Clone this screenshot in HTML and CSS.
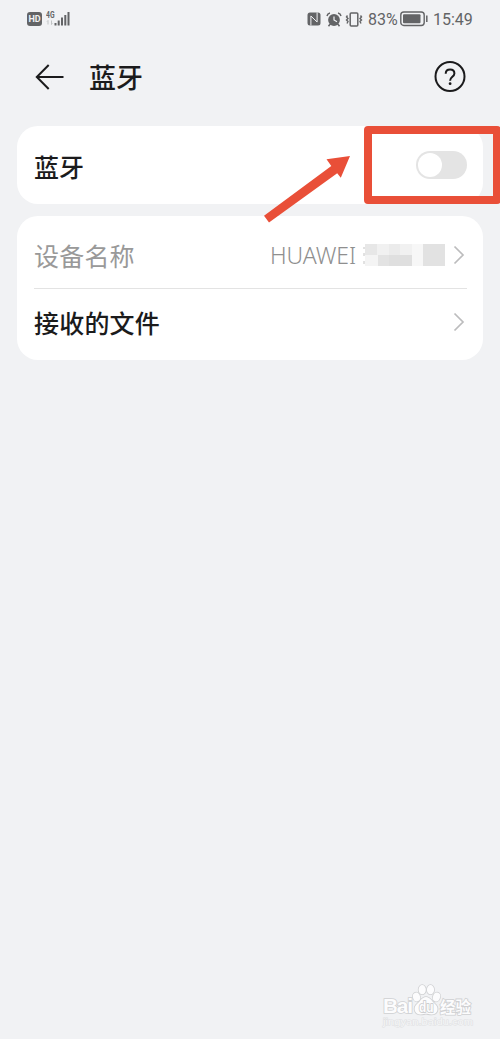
FILE: index.html
```html
<!DOCTYPE html>
<html lang="zh-CN">
<head>
  <meta charset="UTF-8">
  <meta name="viewport" content="width=device-width, initial-scale=1.0">
  <title>蓝牙</title>
  <link rel="stylesheet" href="styles.css">
</head>
<body>
  <div class="screen">
    <!-- Status bar -->
    <div class="status-bar">
      <div class="status-left">
        <span class="hd">HD</span>
        <svg class="signal" width="25" height="18" viewBox="0 0 25 18">
          <text class="net" x="0" y="8.4" textLength="8.5" lengthAdjust="spacingAndGlyphs">4G</text>
          <path d="M2 14.5v-4l-1 1M5.500 10.500v4l1-1" fill="none" stroke="#b5b7b9" stroke-width=".8"/>
          <path d="M8.500 13h2v2.500h-2zM11.700 10.500h2v5h-2zM15 7.500h2v8h-2zM18.300 5h2v10.500h-2zM21.500 2h2v13.500h-2z" fill="#636466"/>
        </svg>
      </div>
      <div class="status-right">
        <svg class="nfc" width="14" height="14" viewBox="0 0 14 14">
          <rect x=".5" y=".5" width="13" height="13" rx="2.500" fill="#636466"/>
          <path d="M3.900 13.500V4l6.200 6V.5" fill="none" stroke="#f1f2f4" stroke-width="1"/>
        </svg>
        <svg class="alarm" width="16" height="15" viewBox="0 0 16 15">
          <circle cx="8" cy="8" r="5.900" fill="#636466"/>
          <path d="M1 4Q1.500 1.500 4 1M15 4Q14.500 1.500 12 1M4 12.300l-1.500 2M12 12.300l1.500 2" fill="none" stroke="#636466" stroke-width="1.500"/>
          <path d="M8 4.500V8l3 1.800" fill="none" stroke="#f1f2f4" stroke-width="1.200"/>
        </svg>
        <svg class="vibrate" width="18" height="15" viewBox="0 0 18 15">
          <rect x="5.200" y="1" width="7.600" height="13" rx="1" fill="none" stroke="#636466" stroke-width="1.500"/>
          <path d="M2.500 3.500l-1 1.500 1.500 1.500-1.500 1.500L3 9.500l-1 2M15.500 3.500l1 1.500L15 6.500 16.500 8 15 9.500l1 2" fill="none" stroke="#636466" stroke-width="1.400"/>
        </svg>
        <span class="percent">83%</span>
        <svg class="battery" width="28" height="16" viewBox="0 0 28 16">
          <rect x=".8" y="1" width="23.400" height="13.500" rx="3" fill="none" stroke="#636466" stroke-width="1.400"/>
          <rect x="3" y="3.300" width="17.500" height="9" rx="1" fill="#636466"/>
          <path d="M26.800 4.500v6.500" stroke="#636466" stroke-width="1.500"/>
        </svg>
        <span class="time">15:49</span>
      </div>
    </div>

    <!-- Page header -->
    <div class="header">
      <svg class="back" width="30" height="28" viewBox="0 0 30 28">
        <path d="M28.500 14H2M13.700 2L1.800 14l11.900 12" fill="none" stroke="#1b1b1c" stroke-width="2"/>
      </svg>
      <h1>蓝牙</h1>
      <svg class="help" width="32" height="32" viewBox="0 0 32 32">
        <circle cx="16" cy="15.500" r="14.500" fill="none" stroke="#1b1b1c" stroke-width="2"/>
        <path d="M11.700 12.800c0-2.700 1.800-4.300 4.400-4.300s4.300 1.600 4.300 4c0 3.200-4.300 3.500-4.300 7.200" fill="none" stroke="#1b1b1c" stroke-width="2"/>
        <circle cx="16.100" cy="22.700" r="1.400" fill="#1b1b1c"/>
      </svg>
    </div>

    <!-- Bluetooth switch -->
    <div class="card switch-card">
      <span class="label">蓝牙</span>
      <span class="switch"><span class="knob"></span></span>
    </div>

    <!-- Device settings -->
    <div class="card">
      <div class="row row-name">
        <span class="label muted">设备名称</span>
        <span class="value">HUAWEI</span>
        <svg class="mosaic" width="82" height="24" viewBox="0 0 82 24">
          <path d="M1 4v2M1 10v3M1 18v3" stroke="#c4c4c4" stroke-width="1"/>
          <path d="M2 1h12v11H2z" fill="#e7e7e7"/>
          <path d="M14 1h12v11H14z" fill="#f1f1f1"/>
          <path d="M26 1h11v11H26z" fill="#ebebeb"/>
          <path d="M37 1h12v11H37z" fill="#f1f1f1"/>
          <path d="M2 12h13v11H2z" fill="#f4f4f4"/>
          <path d="M15 12h11v11H15z" fill="#e3e3e3"/>
          <path d="M26 12h23v11H26z" fill="#dfdfdf"/>
          <path d="M49 1h11v22H49z" fill="#f7f7f7"/>
          <path d="M60 1h22v22H60z" fill="#e2e2e2"/>
        </svg>
        <svg class="chevron" width="12" height="20" viewBox="0 0 12 20">
          <path d="M1.500 1.500L10 10l-8.500 8.500" fill="none" stroke="#bcbcbd" stroke-width="1.700"/>
        </svg>
      </div>
      <div class="row row-files">
        <span class="label">接收的文件</span>
        <svg class="chevron" width="12" height="20" viewBox="0 0 12 20">
          <path d="M1.500 1.500L10 10l-8.500 8.500" fill="none" stroke="#bcbcbd" stroke-width="1.700"/>
        </svg>
      </div>
    </div>

    <!-- Annotation over the switch -->
    <div class="highlight"></div>
    <svg class="arrow" width="90" height="70" viewBox="0 0 90 70">
      <path d="M90 1L80.800 22.700 77.200 18.200 9 67.500 4 60.700 71.300 11 66.500 4.200z" fill="#e94f38"/>
    </svg>

    <!-- Watermark -->
    <svg class="watermark" width="100" height="50" viewBox="0 0 100 50">
      <g class="logo">
        <text x="3" y="32" font-size="21" textLength="30">Bai</text>
        <path d="M46 16c-4 0-5.500 4-8.500 6.500-5.500 4.500-2.500 11 3 11 3 0 3.500-.7 5.500-.7s2.500.7 5.500.7c6 0 8.500-6.500 3-11C51.500 20 50 16 46 16z"/>
        <ellipse cx="36.500" cy="16" rx="3.500" ry="4.500" transform="rotate(-15 36.500 16)"/>
        <ellipse cx="42.200" cy="8.700" rx="3.600" ry="4.600"/>
        <ellipse cx="50.500" cy="8.700" rx="3.600" ry="4.600"/>
        <ellipse cx="56.500" cy="16" rx="3.500" ry="4.500" transform="rotate(20 56.500 16)"/>
        <text class="du" x="39" y="31" font-size="14" textLength="14.500" lengthAdjust="spacingAndGlyphs">du</text>
        <text class="cn" x="60" y="31.500" font-size="16" textLength="31" lengthAdjust="spacingAndGlyphs">经验</text>
      </g>
      <text class="site" x="3" y="44" font-size="9.500" textLength="90" lengthAdjust="spacingAndGlyphs">jingyan.baidu.com</text>
    </svg>
  </div>
</body>
</html>
```

FILE: styles.css
```css
body {
  margin: 0;
  background-color: #f1f2f4;
  font-family: "Noto Sans", "Noto Sans CJK SC", sans-serif;
}

svg {
  display: block;
  flex-shrink: 0;
}

.screen {
  position: relative;
  box-sizing: border-box;
  height: 1039px;
  padding: 0 17px;
  overflow: hidden;
  color: #1b1b1c;
}

/* Status bar */
.status-bar {
  display: flex;
  justify-content: space-between;
  align-items: center;
  height: 38px;
  padding: 0 10px;
  color: #636466;
  line-height: 1;
}

.status-left,
.status-right {
  display: flex;
  align-items: center;
}

.hd {
  width: 15px;
  height: 14px;
  margin-right: 4px;
  border-radius: 3px;
  background-color: #636466;
  color: #f1f2f4;
  font: bold 9px/14px "Roboto", sans-serif;
  text-align: center;
}

.net {
  fill: #636466;
  font: bold 8.5px "Roboto", sans-serif;
}

.alarm {
  margin-left: 5px;
}

.vibrate {
  margin-left: 3px;
}

.percent {
  width: 30px;
  margin: 1px 2px 0 5px;
  font: 16px/1 "Roboto", sans-serif;
}

.time {
  width: 40px;
  margin: 1px 0 0 5px;
  font: 16px/1 "Roboto", sans-serif;
}

/* Header */
.header {
  display: flex;
  align-items: center;
  height: 77px;
  padding: 0 17px 0 18px;
}

h1 {
  flex: 1;
  margin: 0 0 0 24px;
  font: 500 27px/40px "Noto Sans CJK SC", sans-serif;
}

/* Cards */
.card {
  margin-bottom: 12px;
  padding: 0 16px 0 17px;
  border-radius: 21px;
  background-color: #fff;
}

.switch-card {
  display: flex;
  justify-content: space-between;
  align-items: center;
  height: 78px;
  margin-top: 11px;
}

.label {
  font: 500 25px/36px "Noto Sans CJK SC", sans-serif;
}

.switch-card .label {
  padding-top: 2px;
}

.muted {
  color: #999;
  font-weight: 400;
}

.switch {
  box-sizing: border-box;
  width: 51px;
  height: 28px;
  padding: 2px;
  border-radius: 14px;
  background-color: #e4e4e4;
}

.knob {
  display: block;
  width: 24px;
  height: 24px;
  border-radius: 50%;
  background-color: #fff;
}

.row {
  display: flex;
  align-items: center;
}

.row .label {
  flex: 1;
  letter-spacing: 0.2px;
}

.row-name {
  height: 72px;
  border-bottom: 1px solid #e3e3e3;
}

.row-name .label,
.row-name svg {
  margin-top: 6px;
}

.row-name .value {
  margin-top: 6px;
}

.row-files {
  height: 65px;
  padding-bottom: 6px;
}

.row-files .label {
  padding-top: 1px;
}

.value {
  color: #8f8f8f;
  font: 300 23px/30px "Noto Sans", sans-serif;
  letter-spacing: -0.1px;
}

.mosaic {
  margin-left: 7px;
}

.chevron {
  margin: 0 2px 0 8px;
}

/* Red frame and arrow pointing at the switch */
.highlight {
  position: absolute;
  top: 126px;
  left: 364px;
  box-sizing: border-box;
  width: 137px;
  height: 78px;
  border: 8px solid #e94f38;
  border-radius: 4px;
}

.arrow {
  position: absolute;
  top: 155px;
  left: 260px;
}

/* Watermark */
.watermark {
  position: absolute;
  top: 981px;
  left: 380px;
}

.logo {
  fill: #fcfcfd;
  stroke: #cfd0d2;
  stroke-width: 1.6px;
  paint-order: stroke;
  font-family: "Liberation Sans", sans-serif;
  font-weight: bold;
}

.logo .du {
  stroke: #c6c7c9;
}

.logo .cn {
  font-family: "Noto Sans CJK SC", sans-serif;
}

.site {
  fill: #f5f6f7;
  stroke: #dfe0e2;
  stroke-width: 1px;
  paint-order: stroke;
  font-family: "Liberation Sans", sans-serif;
}
```
